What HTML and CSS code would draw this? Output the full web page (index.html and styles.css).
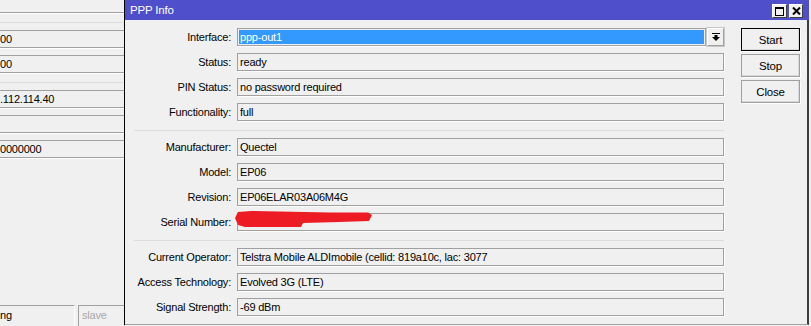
FILE: index.html
```html
<!DOCTYPE html>
<html lang="en">

<head>
    <meta charset="UTF-8">
    <meta name="viewport" content="width=device-width, initial-scale=1.0">
    <title>PPP Info</title>
    <link rel="stylesheet" href="styles.css">
</head>

<body>
    <div class="screen">
        <!-- window behind, only its right edge shows -->
        <div class="back-win">
            <div class="bf bf-first"></div>
            <div class="sep"></div>
            <div class="bf">00</div>
            <div class="bf">00</div>
            <div class="sep"></div>
            <div class="bf">.112.114.40</div>
            <div class="bf"></div>
            <div class="bf">0000000</div>
            <div class="bstatus">
                <div class="bcell">ng</div>
                <div class="bcell slave">slave</div>
            </div>
        </div>

        <div class="ppp">
            <div class="titlebar">
                <span class="title">PPP Info</span>
                <div class="tb-btns">
                    <div class="tb-btn">
                        <svg width="9" height="9" viewBox="0 0 9 9">
                            <rect x="0.5" y="1" width="8" height="7.5" fill="none" stroke="#000" />
                            <rect x="0" y="0" width="9" height="2" fill="#000" />
                        </svg>
                    </div>
                    <div class="tb-btn">
                        <svg width="9" height="8" viewBox="0 0 9 8">
                            <path d="M1 0.5L8 7.5M8 0.5L1 7.5" stroke="#000" stroke-width="2" />
                        </svg>
                    </div>
                </div>
            </div>

            <div class="ppp-body">
                <div class="form">
                    <div class="row">
                        <label>Interface:</label>
                        <div class="combo">
                            <div class="field select"><span class="sel">ppp-out1</span></div>
                            <div class="drop">
                                <svg width="8" height="8" viewBox="0 0 8 8">
                                    <rect x="0" y="0" width="8" height="1" />
                                    <rect x="2.5" y="2" width="3" height="2" />
                                    <path d="M0 4h8L4 8z" />
                                </svg>
                            </div>
                        </div>
                    </div>
                    <div class="row"><label>Status:</label><div class="field">ready</div></div>
                    <div class="row"><label>PIN Status:</label><div class="field">no password required</div></div>
                    <div class="row"><label>Functionality:</label><div class="field">full</div></div>
                    <div class="sep"></div>
                    <div class="row"><label>Manufacturer:</label><div class="field">Quectel</div></div>
                    <div class="row"><label>Model:</label><div class="field">EP06</div></div>
                    <div class="row"><label>Revision:</label><div class="field">EP06ELAR03A06M4G</div></div>
                    <div class="row serial">
                        <label>Serial Number:</label><div class="field"></div>
                        <svg class="scribble" width="140" height="18" viewBox="0 0 140 18">
                            <path d="M3 1L16 0L95 1.5L133 1.5L137 4L134 10L104 11L68 12L66 16L10 16L3 14L0 7z" fill="#ed1c24" />
                        </svg>
                    </div>
                    <div class="sep"></div>
                    <div class="row"><label>Current Operator:</label><div class="field">Telstra Mobile ALDImobile (cellid: 819a10c, lac: 3077</div></div>
                    <div class="row"><label>Access Technology:</label><div class="field">Evolved 3G (LTE)</div></div>
                    <div class="row"><label>Signal Strength:</label><div class="field">-69 dBm</div></div>
                </div>

                <div class="actions">
                    <button class="btn default">Start</button>
                    <button class="btn">Stop</button>
                    <button class="btn">Close</button>
                </div>
            </div>
        </div>
    </div>
</body>

</html>
```

FILE: styles.css
```css
* {
    margin: 0;
    padding: 0;
    box-sizing: border-box;
}

body {
    background-color: #f0f0f0;
    font-family: "Liberation Sans", Arial, sans-serif;
    font-size: 11px;
    letter-spacing: -0.2px;
    color: #000;
}

.screen {
    display: flex;
    width: 811px;
    height: 326px;
    overflow: hidden;
}

/* back window */
.back-win {
    width: 124px;
    height: 326px;
    overflow: hidden;
    display: flex;
    flex-direction: column;
}

.bf {
    width: 140px;
    height: 18px;
    flex-shrink: 0;
    margin-bottom: 7px;
    border-top: 1px solid #a0a0a0;
    border-bottom: 1px solid #a0a0a0;
    box-shadow: 0 1px 0 #fff;
    line-height: 16px;
    white-space: nowrap;
}

.bf-first {
    margin-top: -5px;
}

.sep {
    height: 1px;
    flex-shrink: 0;
    margin-top: 2px;
    margin-bottom: 7px;
    background-color: #dcdcdc;
}

.bstatus {
    margin-top: auto;
    height: 21px;
    display: flex;
    gap: 3px;
}

.bcell {
    width: 75px;
    border-top: 1px solid #a0a0a0;
    border-right: 1px solid #fff;
    line-height: 19px;
}

.bcell.slave {
    flex: 1;
    border-left: 1px solid #a0a0a0;
    border-right: none;
    color: #a8a8a8;
    padding-left: 3px;
}

/* ppp window */
.ppp {
    width: 685px;
    height: 325px;
    border-left: 1px solid #000;
    display: flex;
    flex-direction: column;
}

.titlebar {
    height: 20px;
    background-color: #4f4fcb;
    display: flex;
    align-items: center;
    justify-content: space-between;
    padding: 0 6px 0 5px;
}

.title {
    color: #fff;
    font-size: 11.5px;
}

.tb-btns {
    display: flex;
    gap: 2px;
    margin-top: 2px;
}

.tb-btn {
    width: 15px;
    height: 14px;
    background-color: #f0f0f0;
    border: 1px solid #fff;
    border-right-color: #404040;
    border-bottom-color: #404040;
    display: flex;
    align-items: center;
    justify-content: center;
}

.tb-btn + .tb-btn {
    width: 14px;
}

.ppp-body {
    flex: 1;
    display: flex;
    border-right: 2px solid #3c3c3c;
    border-bottom: 1px solid #a0a0a0;
}

.form {
    width: 599px;
    padding: 8px 0 0 9px;
    display: flex;
    flex-direction: column;
}

.form .sep {
    margin-left: 0;
    width: 590px;
}

.row {
    display: flex;
    align-items: center;
    gap: 6px;
    height: 18px;
    flex-shrink: 0;
    margin-bottom: 7px;
    position: relative;
}

.row label {
    width: 97px;
    text-align: right;
    white-space: nowrap;
}

.field {
    width: 487px;
    height: 18px;
    border: 1px solid #a0a0a0;
    box-shadow: 1px 1px 0 #fff;
    padding-left: 2px;
    line-height: 16px;
    white-space: nowrap;
    overflow: hidden;
}

.combo {
    display: flex;
    gap: 1px;
    width: 487px;
}

.field.select {
    width: 469px;
    padding: 1px;
}

.sel {
    display: block;
    height: 14px;
    line-height: 14px;
    background-color: #3399ff;
    color: #fff;
    padding-left: 1px;
}

.drop {
    width: 17px;
    height: 18px;
    border: 1px solid #fff;
    border-right-color: #a0a0a0;
    border-bottom-color: #a0a0a0;
    outline: 1px solid #c8c8c8;
    display: flex;
    align-items: center;
    justify-content: center;
}

.scribble {
    position: absolute;
    left: 101px;
    top: -2px;
}

/* buttons */
.actions {
    margin-left: 17px;
    padding-top: 8px;
    display: flex;
    flex-direction: column;
    gap: 3px;
}

.btn {
    width: 59px;
    height: 23px;
    background-color: #f0f0f0;
    border: 1px solid #a0a0a0;
    box-shadow: inset -1px -1px 0 #d8d8d8, 1px 1px 0 #fff;
    font-family: "Liberation Sans", Arial, sans-serif;
    font-size: 11.5px;
    letter-spacing: -0.2px;
    color: #000;
}

.btn.default {
    border-color: #000;
}
```
